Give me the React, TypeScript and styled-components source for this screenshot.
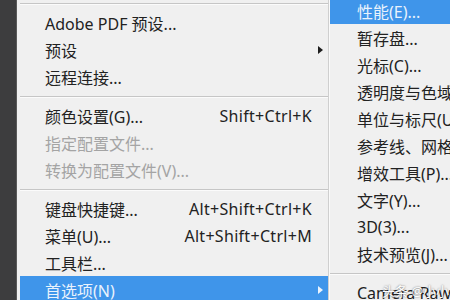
import React from 'react'
import styled, { createGlobalStyle } from 'styled-components'

const GlobalStyle = createGlobalStyle`
  html, body {
    margin: 0;
    padding: 0;
    background: #f0f0f0;
  }
  body {
    font-family: 'Noto Sans', 'Noto Sans CJK SC', sans-serif;
  }
`

const Screen = styled.div`
  position: relative;
  display: flex;
  width: 450px;
  height: 300px;
  overflow: hidden;
  background: #f0f0f0;
`

const DarkStrip = styled.div`
  width: 16px;
  flex: none;
  background: #3d3d3e;
  border-right: 1px solid #5a5a5a;
`

const Menu = styled.div<{ $width?: number }>`
  display: flex;
  flex-direction: column;
  flex: ${(p) => (p.$width ? 'none' : '1')};
  width: ${(p) => (p.$width ? `${p.$width}px` : 'auto')};
  margin-top: -3px;
  background: #f0f0f0;
  min-width: 0;
`

const Divider = styled.div`
  width: 2px;
  flex: none;
  background: linear-gradient(to right, #cfcfcf 50%, #fafafa 50%);
`

const Separator = styled.div<{ $inset: number }>`
  height: 12px;
  flex: none;
  display: flex;
  align-items: center;
  padding-left: ${(p) => p.$inset}px;

  &::after {
    content: '';
    flex: 1;
    height: 1px;
    background: #c6c6c6;
    box-shadow: 0 1px 0 #fbfbfb;
  }
`

const Row = styled.div<{ $active?: boolean; $disabled?: boolean; $pad: number; $inset: number }>`
  position: relative;
  height: 27px;
  flex: none;
  display: flex;
  align-items: center;
  justify-content: space-between;
  margin-left: ${(p) => p.$inset}px;
  padding-left: ${(p) => p.$pad}px;
  padding-right: 16px;
  font-size: 16px;
  white-space: nowrap;
  overflow: hidden;
  color: ${(p) => (p.$active ? '#e9f2fc' : p.$disabled ? '#a4a4a4' : '#222')};
  background: ${(p) => (p.$active ? '#3f95ea' : 'transparent')};
`

const Shortcut = styled.span`
  letter-spacing: 0.3px;
`

const Arrow = styled.svg<{ $light?: boolean }>`
  position: absolute;
  right: 5px;
  top: 50%;
  margin-top: -4px;
  width: 5px;
  height: 8px;
  fill: ${(p) => (p.$light ? '#eaf3fd' : '#1d1d1d')};
`

const Watermark = styled.div`
  position: absolute;
  left: 382px;
  top: 281px;
  font-size: 13px;
  color: #fff;
  text-shadow: 0 0 2px rgba(0, 0, 0, 0.6);
  white-space: nowrap;
`

type Item =
  | { kind: 'sep' }
  | { kind: 'item'; label: string; shortcut?: string; sub?: boolean; active?: boolean; disabled?: boolean }

const mainItems: Item[] = [
  { kind: 'sep' },
  { kind: 'item', label: 'Adobe PDF 预设...' },
  { kind: 'item', label: '预设', sub: true },
  { kind: 'item', label: '远程连接...' },
  { kind: 'sep' },
  { kind: 'item', label: '颜色设置(G)...', shortcut: 'Shift+Ctrl+K' },
  { kind: 'item', label: '指定配置文件...', disabled: true },
  { kind: 'item', label: '转换为配置文件(V)...', disabled: true },
  { kind: 'sep' },
  { kind: 'item', label: '键盘快捷键...', shortcut: 'Alt+Shift+Ctrl+K' },
  { kind: 'item', label: '菜单(U)...', shortcut: 'Alt+Shift+Ctrl+M' },
  { kind: 'item', label: '工具栏...' },
  { kind: 'item', label: '首选项(N)', sub: true, active: true },
]

const subItems: Item[] = [
  { kind: 'item', label: '性能(E)...', active: true },
  { kind: 'item', label: '暂存盘...' },
  { kind: 'item', label: '光标(C)...' },
  { kind: 'item', label: '透明度与色域(T)...' },
  { kind: 'item', label: '单位与标尺(U)...' },
  { kind: 'item', label: '参考线、网格和切片(S)...' },
  { kind: 'item', label: '增效工具(P)...' },
  { kind: 'item', label: '文字(Y)...' },
  { kind: 'item', label: '3D(3)...' },
  { kind: 'item', label: '技术预览(J)...' },
  { kind: 'sep' },
  { kind: 'item', label: 'Camera Raw...' },
]

function MenuList({ items, pad, inset }: { items: Item[]; pad: number; inset: number }) {
  return (
    <>
      {items.map((it, i) =>
        it.kind === 'sep' ? (
          <Separator key={i} $inset={inset} />
        ) : (
          <Row key={i} $active={it.active} $disabled={it.disabled} $pad={pad} $inset={inset}>
            <span>{it.label}</span>
            {it.shortcut && <Shortcut>{it.shortcut}</Shortcut>}
            {it.sub && (
              <Arrow $light={it.active} viewBox='0 0 5 8'>
                <polygon points='0,0 5,4 0,8' />
              </Arrow>
            )}
          </Row>
        ),
      )}
    </>
  )
}

export default function App() {
  return (
    <Screen>
      <GlobalStyle />
      <DarkStrip />
      <Menu $width={311}>
        <MenuList items={mainItems} pad={25} inset={3} />
      </Menu>
      <Divider />
      <Menu>
        <MenuList items={subItems} pad={27} inset={0} />
      </Menu>
      <Watermark>头条 @小小</Watermark>
    </Screen>
  )
}
